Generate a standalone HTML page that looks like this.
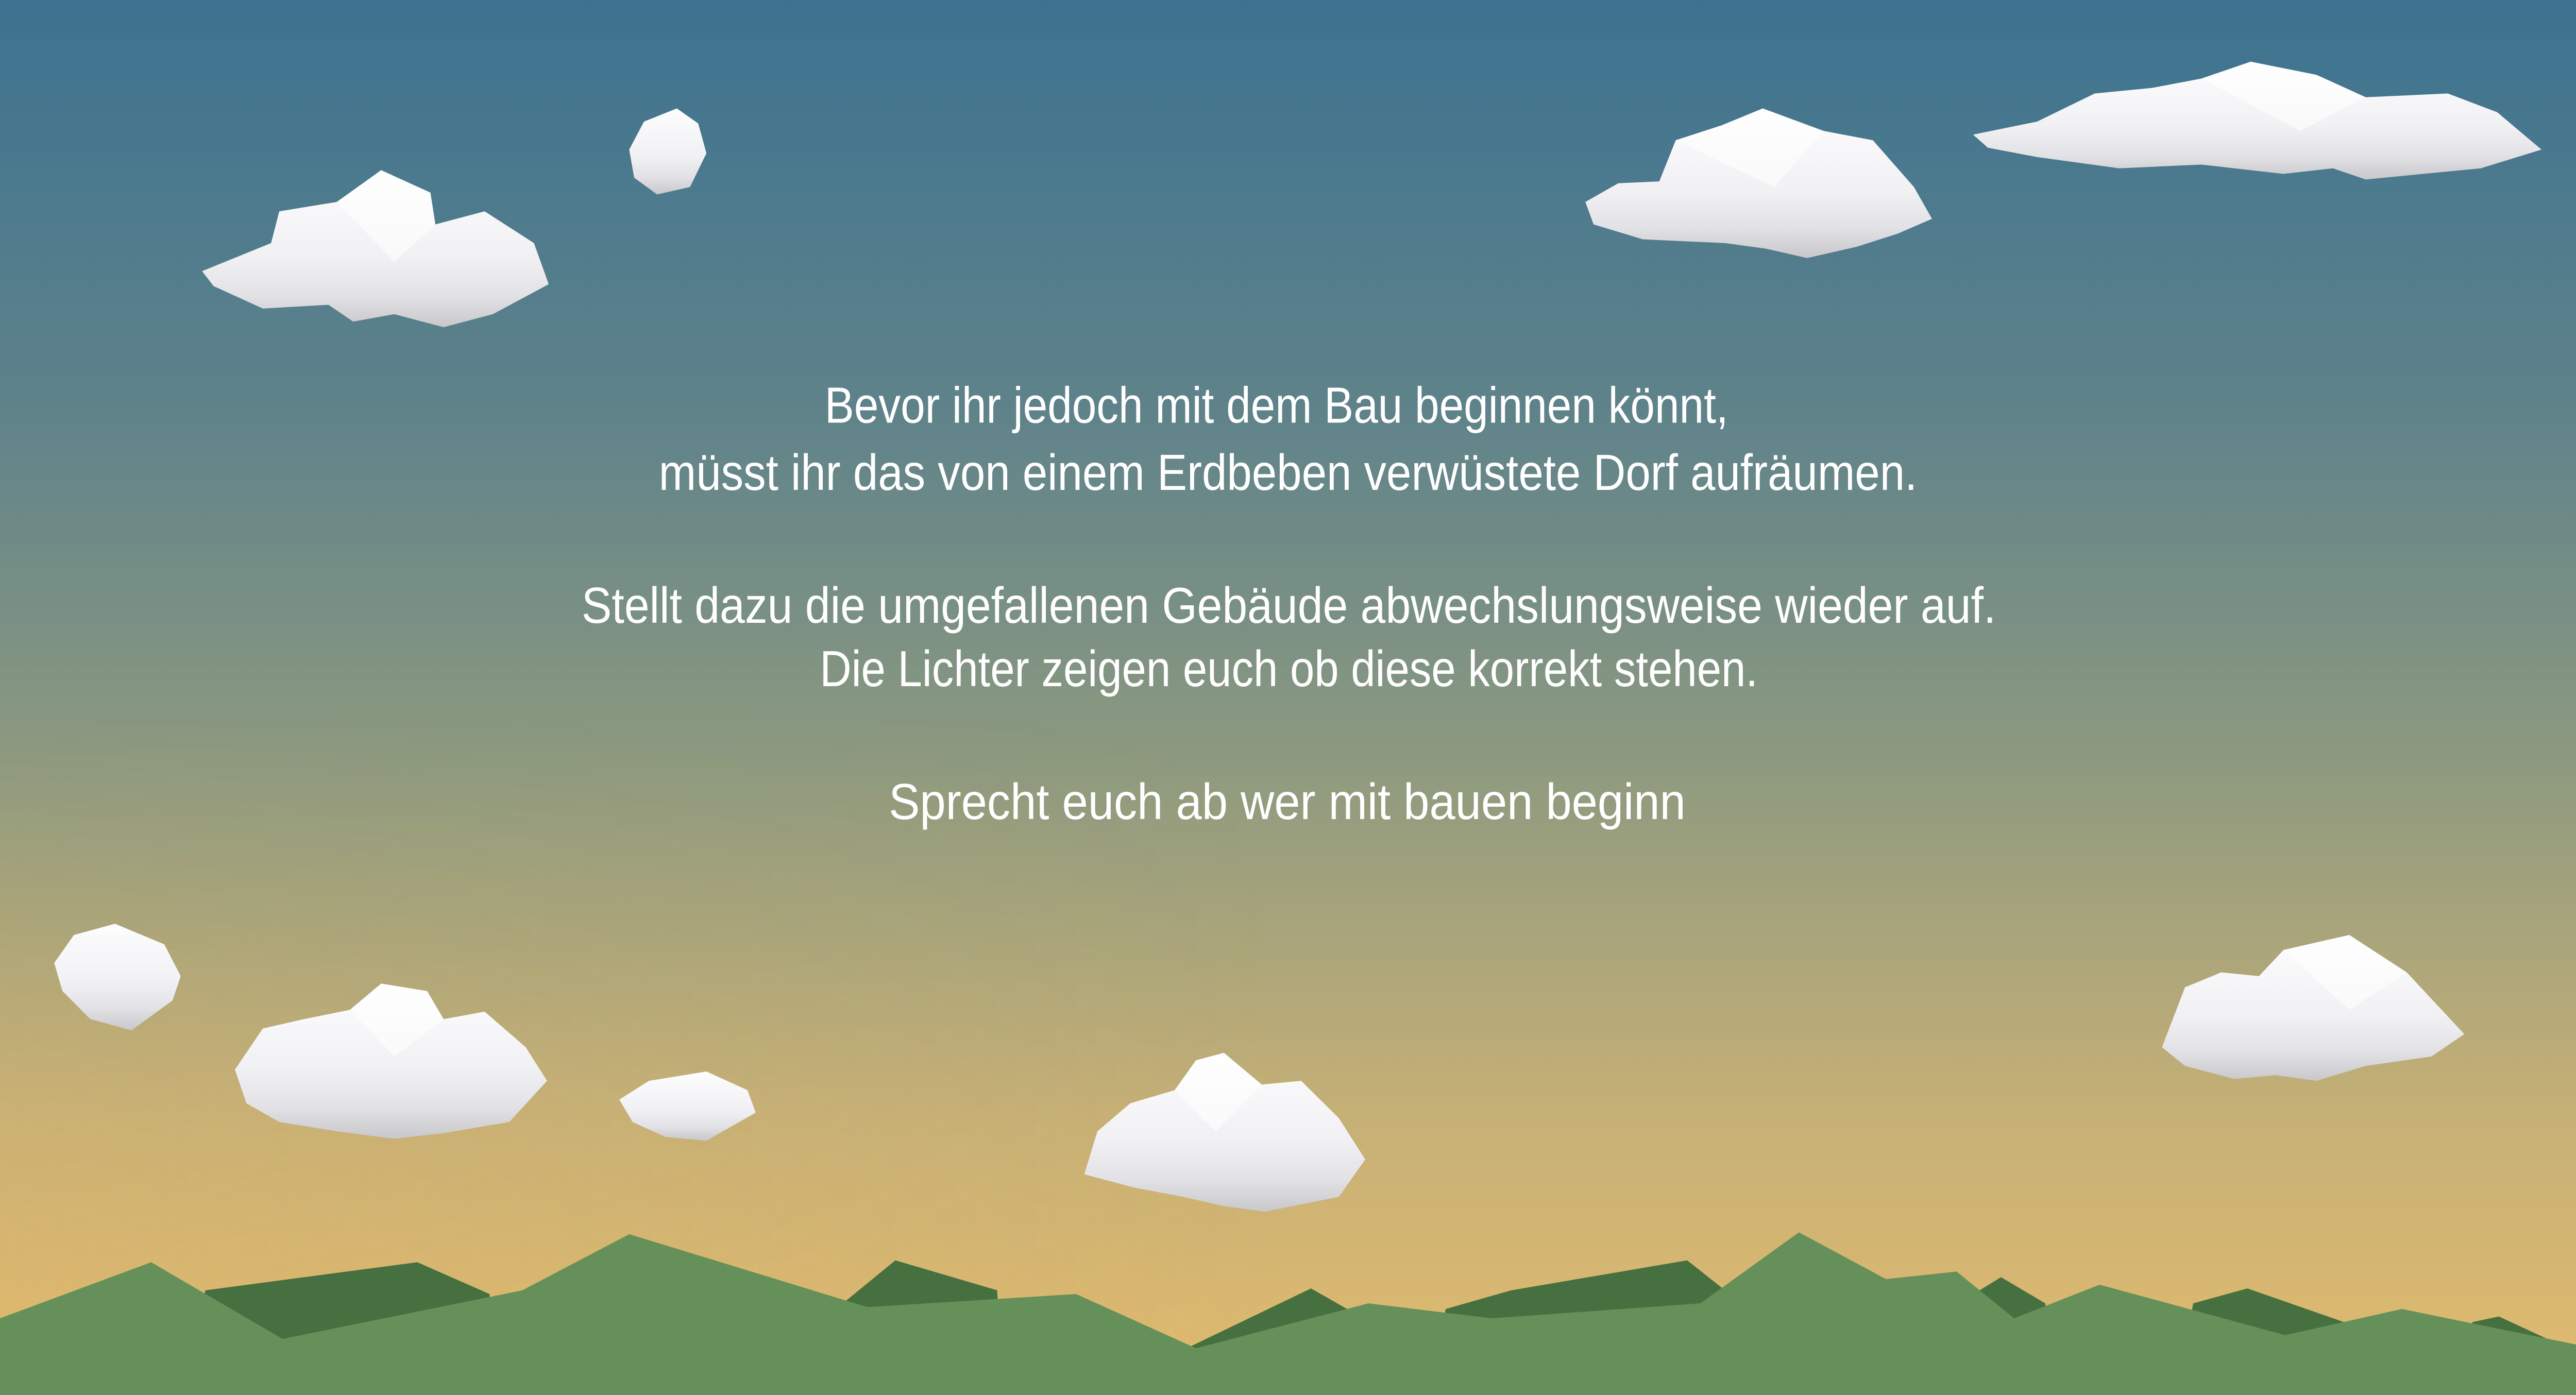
<!DOCTYPE html>
<html><head><meta charset="utf-8">
<style>
html,body{margin:0;padding:0;width:100%;height:100%;overflow:hidden;}
svg{display:block;width:100vw;height:100vh;}
</style></head>
<body>
<svg viewBox="0 0 1568 746" preserveAspectRatio="none" xmlns="http://www.w3.org/2000/svg">
<defs>
<linearGradient id="sky" x1="0" y1="0" x2="0" y2="1">
<stop offset="0" stop-color="#3c7290"/>
<stop offset="0.3" stop-color="#60838a"/>
<stop offset="0.55" stop-color="#8e9a7f"/>
<stop offset="0.8" stop-color="#c6b076"/>
<stop offset="1" stop-color="#e2bb6e"/>
</linearGradient>
<linearGradient id="skyL" x1="0" y1="0" x2="1" y2="0">
<stop offset="0" stop-color="#e8b868" stop-opacity="0.25"/>
<stop offset="0.5" stop-color="#e8b868" stop-opacity="0"/>
</linearGradient>
<linearGradient id="skyM" x1="0" y1="0" x2="0" y2="1">
<stop offset="0" stop-color="#fff" stop-opacity="0"/>
<stop offset="0.5" stop-color="#fff" stop-opacity="0"/>
<stop offset="1" stop-color="#fff" stop-opacity="1"/>
</linearGradient>
<mask id="m"><rect width="1568" height="746" fill="url(#skyM)"/></mask>
<linearGradient id="cl" x1="0" y1="0" x2="0" y2="1">
<stop offset="0" stop-color="#fdfdfe"/>
<stop offset="0.55" stop-color="#f1f1f4"/>
<stop offset="0.8" stop-color="#e2e2e6"/>
<stop offset="1" stop-color="#c8c7ca"/>
</linearGradient>
</defs>
<rect width="1568" height="746" fill="url(#sky)"/>
<rect width="1568" height="746" fill="url(#skyL)" mask="url(#m)"/>

<g fill="url(#cl)">
<polygon points="123,145 165,130 170,113 205,108 232,91 262,103 265,120 295,113 325,130 334,152 300,168 270,175 240,168 215,172 200,163 160,165 130,153"/>
<polygon points="383,80 392,65 412,58 425,66 430,82 420,100 400,104 386,95"/>
<polygon points="965,108 985,98 1010,97 1020,75 1048,67 1073,58 1110,70 1140,75 1165,100 1176,117 1155,125 1130,132 1100,138 1075,133 1050,130 1000,128 970,120"/>
<polygon points="1201,72 1240,65 1275,50 1310,47 1340,42 1370,33 1410,40 1440,52 1490,50 1520,60 1547,80 1510,90 1440,96 1420,90 1390,93 1340,88 1290,90 1240,84 1210,79"/>
<polygon points="33,515 45,500 70,494 100,505 110,522 105,535 80,551 55,545 38,530"/>
<polygon points="143,572 160,550 185,545 213,540 232,526 260,530 270,545 295,541 320,560 333,578 310,600 270,606 240,609 205,605 170,600 150,590"/>
<polygon points="377,588 395,578 430,573 455,583 460,595 430,610 405,608 385,600"/>
<polygon points="660,628 668,605 688,590 715,583 728,567 745,563 768,580 792,578 815,598 831,620 815,640 770,648 745,645 720,640 690,635"/>
<polygon points="1316,560 1330,528 1352,520 1375,522 1390,508 1430,500 1465,520 1500,553 1480,565 1440,570 1410,578 1385,575 1360,577 1330,570"/>
</g>
<g fill="#ffffff" opacity="0.6">
<polygon points="205,108 232,91 262,103 265,120 240,140"/>
<polygon points="1020,75 1048,67 1073,58 1110,70 1080,100"/>
<polygon points="1340,42 1370,33 1410,40 1440,52 1400,70"/>
<polygon points="213,540 232,526 260,530 270,545 240,565"/>
<polygon points="715,583 728,567 745,563 768,580 740,605"/>
<polygon points="1390,508 1430,500 1465,520 1430,540"/>
</g>

<g fill="#46703f">
<polygon points="110,746 125,690 254,675 298,692 300,746"/>
<polygon points="500,746 513,697 545,674 607,690 610,746"/>
<polygon points="715,746 720,722 798,689 820,700 830,746"/>
<polygon points="870,746 880,700 920,690 1027,674 1050,690 1060,746"/>
<polygon points="1195,746 1205,690 1218,683 1245,697 1250,746"/>
<polygon points="1325,746 1335,697 1368,689 1430,708 1430,746"/>
<polygon points="1495,746 1505,707 1521,704 1553,717 1553,746"/>
</g>
<polygon fill="#66905a" points="0,705 92,675 172,716 318,690 383,660 528,699 655,692 728,721 833,697 908,705 1035,697 1095,659 1148,684 1191,680 1226,705 1278,687 1391,714 1462,700 1568,719 1568,746 0,746"/>

<g fill="#ffffff" font-family="'Liberation Sans', sans-serif" font-weight="300" font-size="27">
<text x="502" y="226" textLength="550" lengthAdjust="spacingAndGlyphs">Bevor ihr jedoch mit dem Bau beginnen könnt,</text>
<text x="401" y="262" textLength="766" lengthAdjust="spacingAndGlyphs">müsst ihr das von einem Erdbeben verwüstete Dorf aufräumen.</text>
<text x="354" y="333" textLength="861" lengthAdjust="spacingAndGlyphs">Stellt dazu die umgefallenen Gebäude abwechslungsweise wieder auf.</text>
<text x="499" y="367" textLength="571" lengthAdjust="spacingAndGlyphs">Die Lichter zeigen euch ob diese korrekt stehen.</text>
<text x="541" y="438" textLength="485" lengthAdjust="spacingAndGlyphs">Sprecht euch ab wer mit bauen beginn</text>
</g>
</svg>
</body></html>
